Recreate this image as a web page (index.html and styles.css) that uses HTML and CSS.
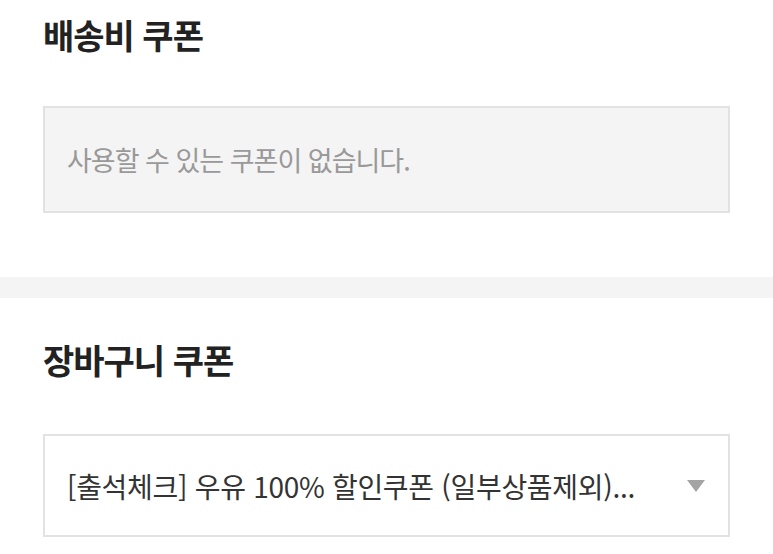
FILE: index.html
```html
<!DOCTYPE html>
<html lang="ko">
<head>
    <meta charset="UTF-8">
    <meta name="viewport" content="width=device-width, initial-scale=1.0">
    <title>쿠폰 선택</title>
    <link rel="stylesheet" href="styles.css">
</head>
<body>

    <section class="coupon-section first">
        <h2 class="section-title">배송비 쿠폰</h2>
        <div class="coupon-empty">사용할 수 있는 쿠폰이 없습니다.</div>
    </section>

    <div class="divider"></div>

    <section class="coupon-section">
        <h2 class="section-title">장바구니 쿠폰</h2>
        <div class="coupon-select">
            <span class="coupon-name">[출석체크] 우유 100% 할인쿠폰 (일부상품제외)...</span>
            <span class="select-arrow"></span>
        </div>
    </section>

</body>
</html>
```

FILE: styles.css
```css
body {
    font-family: 'Noto Sans CJK KR', 'Noto Sans', sans-serif;
    background: #fff;
    color: #222;
    margin: 0;
    padding: 0;
}

.coupon-section {
    padding: 0 43px;
}

.coupon-section.first {
    padding-top: 15px;
    padding-bottom: 64px;
}

.section-title {
    margin: 0;
    font-size: 34px;
    font-weight: 700;
    line-height: 40px;
    letter-spacing: -1px;
    color: #222;
}

.coupon-section.first .section-title {
    margin-bottom: 51px;
}

.coupon-empty {
    height: 103px;
    display: flex;
    align-items: center;
    padding: 0 22px;
    background-color: #f4f4f4;
    border: 2px solid #e2e2e2;
    color: #999;
    font-size: 27px;
    letter-spacing: -1px;
}

.divider {
    height: 21px;
    background-color: #f4f4f4;
}

.coupon-section:last-child {
    padding-top: 42px;
}

.coupon-section:last-child .section-title {
    margin-bottom: 54px;
}

.coupon-select {
    height: 99px;
    display: flex;
    align-items: center;
    justify-content: space-between;
    padding: 0 22px;
    background-color: #fff;
    border: 2px solid #e2e2e2;
    color: #333;
    font-size: 28px;
    letter-spacing: -0.3px;
}

.select-arrow {
    width: 0;
    height: 0;
    margin-right: 1px;
    border-left: 9px solid transparent;
    border-right: 9px solid transparent;
    border-top: 12px solid #a4a4a4;
}
```
